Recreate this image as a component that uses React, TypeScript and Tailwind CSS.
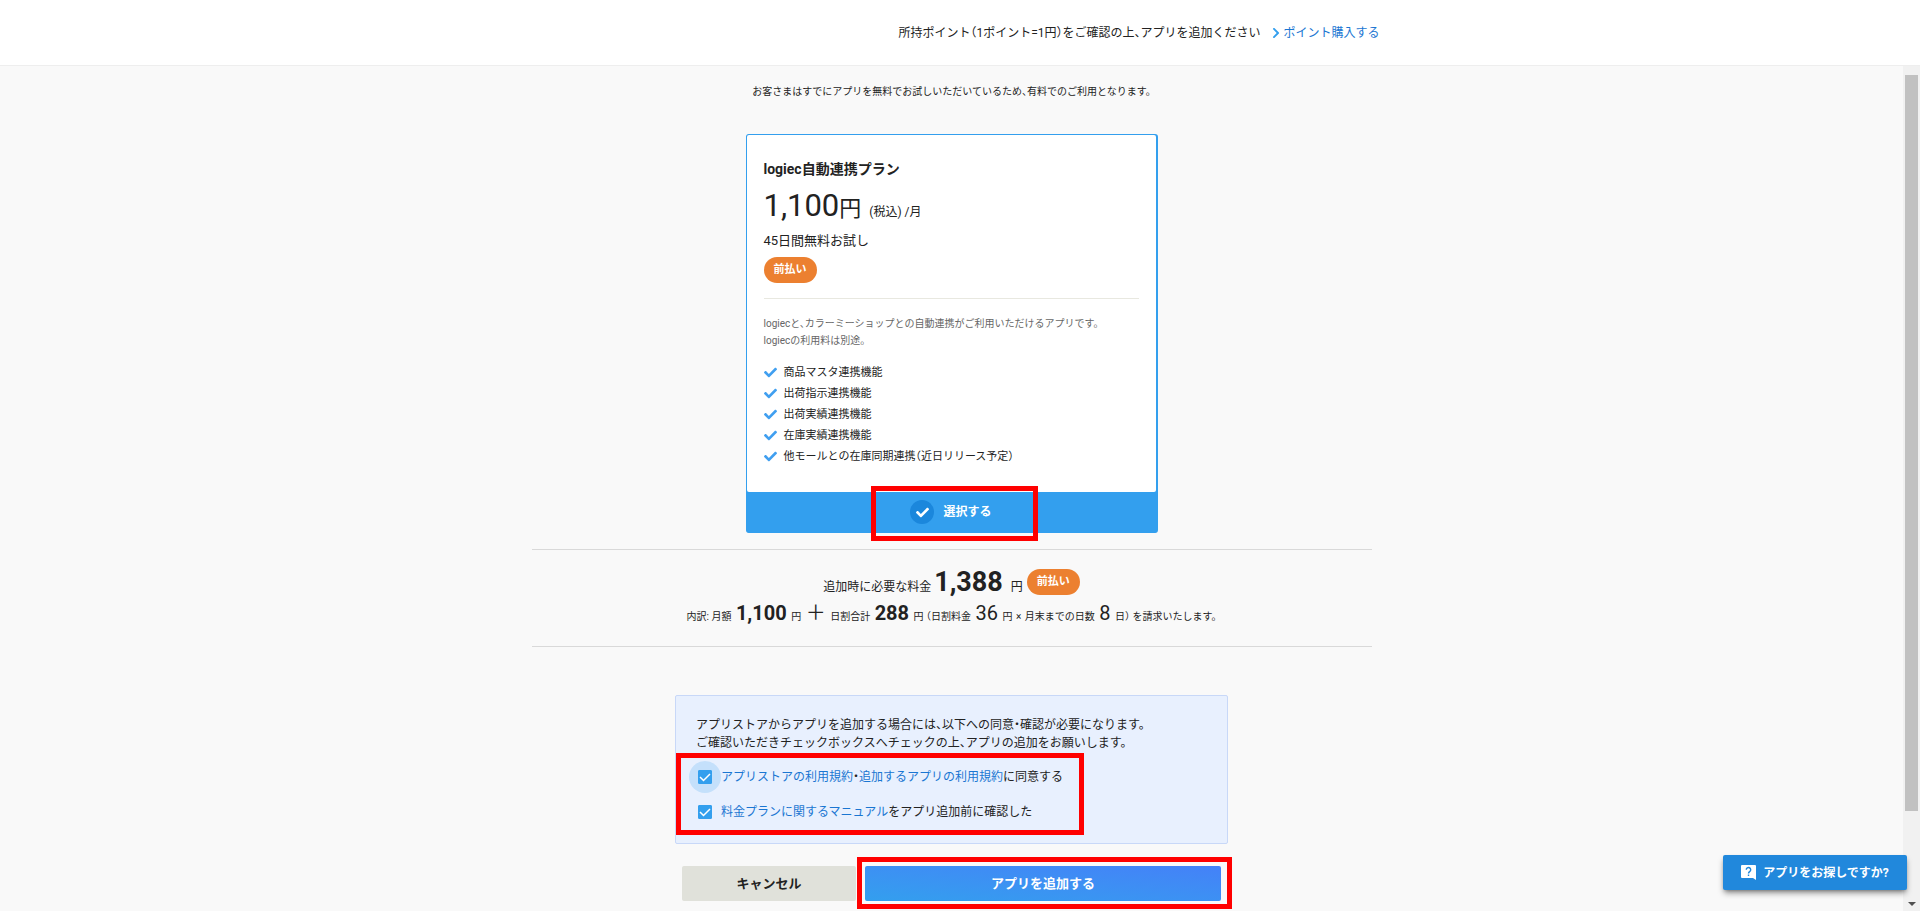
import type { ReactNode } from "react";
import { FaCheck, FaChevronRight } from "react-icons/fa";

const features = [
  "商品マスタ連携機能",
  "出荷指示連携機能",
  "出荷実績連携機能",
  "在庫実績連携機能",
  "他モールとの在庫同期連携（近日リリース予定）",
];

const Badge = () => (
  <span className="inline-flex h-[26px] items-center rounded-full bg-[#ec8030] px-[10px] text-[11px] font-bold text-white">
    前払い
  </span>
);

const Highlight = ({ className }: { className: string }) => (
  <div className={`pointer-events-none absolute border-5 border-[#ff0000] ${className}`} />
);

const ConsentRow = ({
  id,
  focused,
  children,
}: {
  id: string;
  focused?: boolean;
  children: ReactNode;
}) => (
  <div className="flex h-[35px] items-center">
    <span
      className={`flex size-8 shrink-0 items-center justify-center rounded-full ${focused ? "bg-[#c4e0fb]" : ""}`}
    >
      <span className="relative flex">
        <input
          id={id}
          type="checkbox"
          defaultChecked
          className="peer size-[14px] appearance-none rounded-[1px] border border-[#339fee] checked:bg-[#339fee]"
        />
        <svg
          viewBox="0 0 14 14"
          className="pointer-events-none absolute inset-0 hidden size-[14px] fill-none stroke-white peer-checked:block"
          strokeWidth="1.5"
        >
          <path d="M2 7l3.500 3.500L12 4" />
        </svg>
      </span>
    </span>
    <label htmlFor={id}>{children}</label>
  </div>
);

const Header = () => (
  <header className="h-[66px] shrink-0 border-b border-[#eeeeee] bg-white pr-[17px]">
    <div className="mx-auto flex h-full max-w-[856px] items-center justify-end gap-3 text-xs">
      <p>所持ポイント（1ポイント=1円）をご確認の上、アプリを追加ください</p>
      <a href="#points" className="flex items-center gap-[3px] text-[#1a76d2]">
        <FaChevronRight className="h-3 w-2 text-[#339fee]" />
        ポイント購入する
      </a>
    </div>
  </header>
);

const PlanCard = () => (
  <section className="mx-auto w-full max-w-[412px] rounded-[3px] border border-r-2 border-[#339fee] bg-[#339fee]">
    <div className="rounded-[2px] bg-white px-[17px] pt-[22px] pb-[25px]">
      <h2 className="text-sm leading-6 font-bold">logiec自動連携プラン</h2>
      <p className="mt-[7px] flex h-9 items-baseline leading-9">
        <span className="text-[31px]">1,100</span>
        <span className="text-[22px]">円</span>
        <span className="ml-2 text-xs">(税込) /月</span>
      </p>
      <p className="mt-[7px] text-[13px] leading-5">45日間無料お試し</p>
      <div className="mt-[6px] flex">
        <Badge />
      </div>
      <hr className="mt-[15px] border-[#e8e8e0]" />
      <p className="mt-4 text-[10px] leading-[17px] text-[#666666]">
        logiecと、カラーミーショップとの自動連携がご利用いただけるアプリです。
        <br />
        logiecの利用料は別途。
      </p>
      <ul className="mt-[13px] text-[11px] leading-[21px]">
        {features.map((feature) => (
          <li key={feature} className="flex items-center gap-[7px]">
            <FaCheck className="size-[13px] text-[#409ff0]" />
            {feature}
          </li>
        ))}
      </ul>
    </div>
    <div className="relative">
      <button
        type="button"
        className="flex h-10 w-full items-center justify-center gap-[9px] text-xs font-bold text-white"
      >
        <span className="flex size-6 items-center justify-center rounded-full bg-[#1b87dc]">
          <FaCheck className="size-[13px]" />
        </span>
        選択する
      </button>
      <Highlight className="-top-[6px] left-[124px] h-[55px] w-[167px]" />
    </div>
  </section>
);

const Breakdown = () => (
  <section className="mx-auto mt-4 h-[98px] w-full max-w-[840px] border-y border-[#d9d9d9] pt-4 text-center">
    <p className="flex h-8 items-center justify-center text-xs">
      <span>
        追加時に必要な料金 <b className="text-[27px] leading-8">1,388</b>
        <span className="ml-2">円</span>
      </span>
      <span className="ml-1 flex">
        <Badge />
      </span>
    </p>
    <p className="text-[10px] leading-[30px]">
      内訳: 月額 <b className="mx-[2px] text-xl leading-[30px]">1,100</b> 円{" "}
      <span className="mx-[2px] text-xl leading-[30px]">＋</span> 日割合計{" "}
      <b className="mx-[2px] text-xl leading-[30px]">288</b> 円 （日割料金{" "}
      <span className="mx-[2px] text-xl leading-[30px]">36</span> 円 <span className="mx-px">×</span>{" "}
      月末までの日数 <span className="mx-[2px] text-xl leading-[30px]">8</span> 日） を請求いたします。
    </p>
  </section>
);

const Consent = () => (
  <section className="relative mx-auto mt-12 w-full max-w-[553px] rounded-[2px] border border-[#c8d8f8] bg-[#e8f0fe] px-5 pt-5 pb-[14px] text-xs">
    <p className="leading-[18px]">
      アプリストアからアプリを追加する場合には、以下への同意・確認が必要になります。
      <br />
      ご確認いただきチェックボックスへチェックの上、アプリの追加をお願いします。
    </p>
    <div className="mt-[7px] -ml-[7px]">
      <ConsentRow id="terms" focused>
        <a href="#store-terms" className="text-[#1a76d2]">アプリストアの利用規約</a>・
        <a href="#app-terms" className="text-[#1a76d2]">追加するアプリの利用規約</a>に同意する
      </ConsentRow>
      <ConsentRow id="manual">
        <a href="#manual" className="text-[#1a76d2]">料金プランに関するマニュアル</a>をアプリ追加前に確認した
      </ConsentRow>
    </div>
    <Highlight className="top-[57px] left-0 h-[82px] w-[408px]" />
  </section>
);

const Actions = () => (
  <div className="mx-auto mt-[22px] flex w-full max-w-[539px] gap-[9px] text-[13px] font-bold">
    <button type="button" className="h-[35px] w-[174px] rounded-[2px] bg-[#e0e1da]">
      キャンセル
    </button>
    <div className="relative flex-1">
      <button
        type="submit"
        className="h-[35px] w-full rounded-[2px] bg-linear-to-tr from-[#339fee] to-[#4481f8] text-white"
      >
        アプリを追加する
      </button>
      <Highlight className="-top-[9px] -right-[11px] -bottom-2 -left-2" />
    </div>
  </div>
);

const Scrollbar = () => (
  <div aria-hidden="true" className="flex w-[17px] shrink-0 flex-col items-center justify-between bg-[#f1f1f1] pt-[9px] pb-[5px]">
    <div className="h-[calc(100%-95px)] w-[13px] bg-[#c1c1c1]" />
    <svg viewBox="0 0 8 4" className="h-1 w-2 fill-[#505050]">
      <path d="M0 0h8L4 4z" />
    </svg>
  </div>
);

export default function App() {
  return (
    <div className="relative flex h-screen flex-col overflow-hidden bg-[#f9f9f9] font-['Roboto','Noto_Sans_CJK_JP',sans-serif] text-[#222222] [font-feature-settings:'halt']">
      <Header />
      <div className="flex min-h-0 flex-1">
        <main className="min-w-0 flex-1 overflow-hidden">
          <p className="pt-4 pb-8 text-center text-[10px] leading-5">
            お客さまはすでにアプリを無料でお試しいただいているため、有料でのご利用となります。
          </p>
          <PlanCard />
          <Breakdown />
          <Consent />
          <Actions />
        </main>
        <Scrollbar />
      </div>
      <button
        type="button"
        className="absolute right-[13px] bottom-[21px] flex h-[35px] w-[184px] items-center justify-center gap-[7px] rounded-[2px] bg-[#2188dc] text-xs font-bold text-white shadow-md shadow-black/40"
      >
        <svg viewBox="0 0 15 15" className="size-[15px]">
          <path d="M1 0h13a1 1 0 0 1 1 1v14l-3-2H1a1 1 0 0 1-1-1V1a1 1 0 0 1 1-1z" fill="currentColor" />
          <path d="M5.300 4.800a2.200 2.200 0 1 1 3.500 1.700c-.8.600-1.300.9-1.300 1.900M7.500 9.500v1.500" fill="none" stroke="#2188dc" strokeWidth="1.400" />
        </svg>
        アプリをお探しですか?
      </button>
    </div>
  );
}
